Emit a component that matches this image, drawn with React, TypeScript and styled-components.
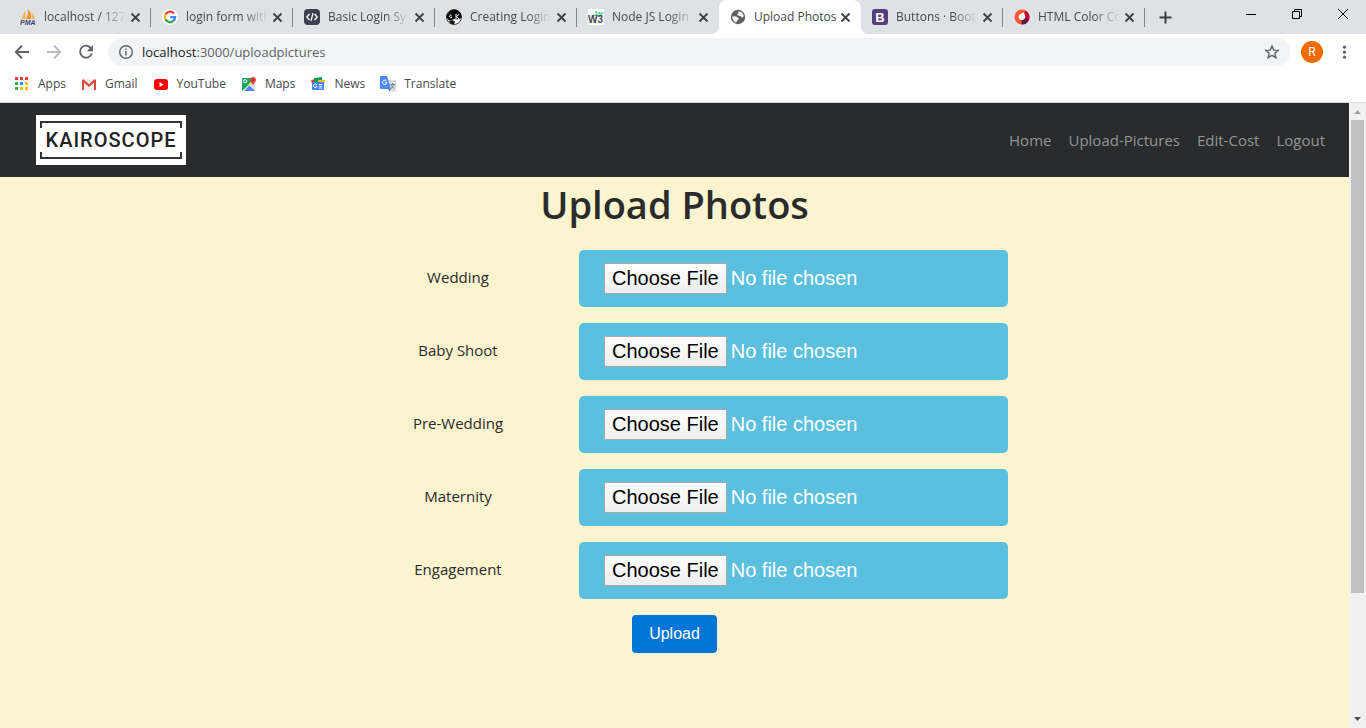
import React from "react";
import styled, { createGlobalStyle, css } from "styled-components";

const ui = `"Segoe UI", "Open Sans", "Noto Sans", sans-serif`;
const arial = `"Liberation Sans", Arial, sans-serif`;

const GlobalStyle = createGlobalStyle`
  *, *::before, *::after { box-sizing: border-box; }
  body { margin: 0; font-family: ${ui}; color: #292b2c; background: #fcf3cf; }
  button, input { font: inherit; color: inherit; }
  button { border: 0; padding: 0; background: none; cursor: pointer; }
  a { text-decoration: none; color: inherit; }
  svg { display: block; flex: none; }
`;

const Screen = styled.div`
  display: flex;
  flex-direction: column;
  min-height: 100vh;
`;

const TabStrip = styled.div`
  display: flex;
  height: 34px;
  padding-left: 9px;
  background: #dee1e6;
`;

const Tab = styled.div<{ $active?: boolean; $divider?: boolean }>`
  position: relative;
  display: flex;
  align-items: center;
  flex: 0 1 142px;
  min-width: 0;
  padding: 0 10px 0 11px;
  ${(p) =>
    p.$divider &&
    css`
      &::after {
        content: "";
        position: absolute;
        right: 0;
        top: 8px;
        width: 1px;
        height: 19px;
        background: #808388;
      }
    `}
  ${(p) =>
    p.$active &&
    css`
      background: #fff;
      border-radius: 8px 8px 0 0;
      &::before,
      &::after {
        content: "";
        position: absolute;
        bottom: 0;
        width: 8px;
        height: 8px;
      }
      &::before {
        left: -8px;
        background: radial-gradient(circle at 0 0, transparent 8px, #fff 8px);
      }
      &::after {
        right: -8px;
        background: radial-gradient(circle at 100% 0, transparent 8px, #fff 8px);
      }
    `}
`;

const TabTitle = styled.button<{ $fade: boolean }>`
  flex: 1;
  min-width: 0;
  margin: 0 1px 0 8px;
  overflow: hidden;
  white-space: nowrap;
  text-align: left;
  font-size: 12px;
  line-height: 18px;
  color: #45494d;
  ${(p) =>
    p.$fade &&
    css`
      mask-image: linear-gradient(to right, #000 66%, transparent 96%);
    `}
`;

const IconButton = styled.button`
  display: flex;
  align-items: center;
  justify-content: center;
`;

const NewTab = styled(IconButton)`
  width: 28px;
  margin-left: 6px;
`;

const WindowControls = styled.div`
  display: flex;
  margin-left: auto;
  height: 28px;
`;

const WindowButton = styled(IconButton)`
  width: 46px;
`;

const Toolbar = styled.div`
  display: flex;
  align-items: center;
  height: 36px;
  padding: 0 14px;
  background: #fff;
`;

const NavButtons = styled.div`
  display: flex;
  gap: 16px;
  margin-right: 14px;
`;

const AddressBar = styled.div`
  display: flex;
  align-items: center;
  flex: 1;
  height: 28px;
  padding: 0 10px;
  border-radius: 14px;
  background: #f1f3f4;
  font-size: 13px;
`;

const Host = styled.label`
  margin-left: 8px;
  color: #202124;
`;

const Address = styled.input`
  flex: 1;
  min-width: 0;
  padding: 0;
  border: 0;
  outline: 0;
  background: none;
  color: #5f6368;
`;

const Profile = styled.button`
  width: 22px;
  height: 22px;
  margin: 0 14px 0 11px;
  border-radius: 50%;
  background: #ef6c00;
  color: #fff;
  font-family: Roboto, sans-serif;
  font-size: 12px;
`;

const Bookmarks = styled.nav`
  display: flex;
  align-items: center;
  gap: 15px;
  height: 33px;
  padding: 0 14px 5px;
  border-bottom: 1px solid #d5d8dc;
  background: #fff;
`;

const Bookmark = styled.a`
  display: flex;
  align-items: center;
  gap: 8px;
  font-size: 12px;
  line-height: 18px;
  color: #45494d;
`;

const Viewport = styled.div`
  display: flex;
  flex: 1;
`;

const Page = styled.div`
  flex: 1;
  min-width: 0;
  background: #fcf3cf;
`;

const Header = styled.header`
  display: flex;
  align-items: center;
  justify-content: space-between;
  padding: 12px 24px 12px 36px;
  background: #292b2c;
`;

const Logo = styled.a`
  position: relative;
  display: flex;
  align-items: center;
  justify-content: center;
  width: 150px;
  height: 50px;
  background: #fff;
  color: #222;
  font: 500 20px Roboto, sans-serif;
  letter-spacing: 1px;
`;

const LogoFrame = styled.svg`
  position: absolute;
  inset: 0;
`;

const Menu = styled.nav`
  display: flex;
  gap: 17px;
  font-size: 15px;
  line-height: 24px;
  color: #949595;
`;

const Title = styled.h1`
  margin: 0;
  padding: 3px 0 21px;
  text-align: center;
  font-size: 38px;
  font-weight: 600;
  line-height: 49px;
`;

const UploadForm = styled.form`
  display: flex;
  flex-direction: column;
  align-items: center;
  gap: 16px;
`;

const Field = styled.div`
  display: flex;
  align-items: center;
  gap: 4px;
  width: 100%;
  max-width: 667px;
`;

const FieldLabel = styled.label`
  flex: 0 0 234px;
  padding-bottom: 4px;
  text-align: center;
  font-size: 15px;
  line-height: 24px;
`;

const FileInput = styled.input`
  flex: 1;
  min-width: 0;
  height: 57px;
  padding: 13px 25px;
  border-radius: 5px;
  background: #5bc0de;
  color: #fff;
  font-family: ${arial};
  font-size: 20px;
  line-height: 30px;

  &::file-selector-button {
    height: 31px;
    margin: 0 4px 0 0;
    padding: 0 7px;
    border: 1px solid #a9a9a9;
    border-radius: 0;
    background: linear-gradient(#fff, #eee);
    color: #000;
    font-family: ${arial};
    font-size: 20px;
  }
`;

const Submit = styled.button`
  width: 85px;
  height: 38px;
  border-radius: 4px;
  background: #0275d8;
  color: #fff;
  font-family: ${arial};
  font-size: 16px;
`;

const Scrollbar = styled.div`
  display: flex;
  flex-direction: column;
  flex: 0 0 17px;
  padding: 0 2px;
  background: #f1f1f1;
`;

const Arrow = styled.svg`
  width: 13px;
  height: 17px;
`;

const Track = styled.div`
  flex: 1;
`;

const Thumb = styled.div`
  height: 80%;
  background: #c1c1c1;
`;

const Viewbox16: React.FC<{ children: React.ReactNode; size?: number }> = ({ children, size = 16 }) => (
  <svg width={size} height={size} viewBox="0 0 16 16" aria-hidden="true">
    {children}
  </svg>
);

const PmaIcon = () => (
  <Viewbox16>
    <path d="M1 10C3 8 4 5 4.500 2C6 5 5.500 8 5 10Z" fill="#fbb040" />
    <path d="M5.500 10C8 7 8.500 4 7.500 0C11.500 3 12 7 10.500 10Z" fill="#f7941e" />
    <path d="M11 10C12.500 7 12 4.500 11.500 3C14 5 15 8 15 10Z" fill="#fbb869" />
    <text x="0" y="15.500" fontSize="7" fontWeight="bold" fontStyle="italic" fontFamily="Liberation Sans" fill="#3d3f70">PMA</text>
  </Viewbox16>
);

const GoogleIcon = () => (
  <Viewbox16>
    <circle cx="8" cy="8" r="8" fill="#fff" />
    <g fill="none" strokeWidth="2.400">
      <path d="M12 4.400A5.100 5.100 0 0 0 3.500 5.600" stroke="#ea4335" />
      <path d="M3.500 5.500A5.100 5.100 0 0 0 3.500 10.500" stroke="#fbbc05" />
      <path d="M3.500 10.400A5.100 5.100 0 0 0 11.500 11.800" stroke="#34a853" />
      <path d="M11.300 12A5.100 5.100 0 0 0 13.100 8.100H8.200" stroke="#4285f4" />
    </g>
  </Viewbox16>
);

const CodeIcon = () => (
  <Viewbox16>
    <rect width="16" height="16" rx="4" fill="#3b424f" />
    <path d="M5.500 5L2.800 8L5.500 11M10.500 5L13.200 8L10.500 11M9 4.200L7 11.800" fill="none" stroke="#fff" strokeWidth="1.300" />
  </Viewbox16>
);

const CreatorIcon = () => (
  <Viewbox16>
    <circle cx="8" cy="8" r="7.500" fill="#fff" stroke="#111" strokeWidth="0.800" />
    <path d="M.5 8.500A7.500 7.500 0 0 1 15.500 8L14.500 9.500L11.500 10.500L8 10L6 11L3 11.500Z" fill="#080808" />
    <path d="M5.600 6.200C3 5.400 2.400 9 5.600 8.800V7.500M10 5V10M10 8L13 5.500M10.500 7.500L13 10" stroke="#fff" fill="none" />
    <path d="M6 11L9 12.500L8 15.500L4.500 14.500L3 12Z" fill="#111" />
  </Viewbox16>
);

const JarIcon = () => (
  <Viewbox16>
    <rect width="16" height="16" fill="#fff" />
    <text x="5" y="7" fontSize="7" fontFamily="Liberation Sans" fontStyle="italic" fontWeight="bold" fill="#42c77c">Jar</text>
    <text x="0" y="14" fontSize="10" fontWeight="bold" fontFamily="Liberation Sans" fill="#3f474f">W3</text>
  </Viewbox16>
);

const GlobeIcon = () => (
  <Viewbox16>
    <circle cx="8" cy="8" r="7.200" fill="#5a5f64" />
    <path d="M2.400 7.200L5.400 7.600C6.800 7.800 7.400 8.600 8.200 8.800C9.200 9.200 9 10.200 8 10.600C7 11 7.400 12 6.600 12.600L6 13.600C3.600 12.700 2 10.300 2.400 7.200Z" fill="#fff" />
    <path d="M8.500 2.200C11.500 2.400 13.600 4.900 13.700 7.400L12.300 8.400C11.300 8.400 11.100 7.300 10 7.100C8.600 7 7.400 6.600 7.300 5.600C7.300 4.600 8.600 4.700 8.400 3.800Z" fill="#fff" />
  </Viewbox16>
);

const BootstrapIcon = () => (
  <Viewbox16>
    <rect width="16" height="16" rx="3" fill="#563d7c" />
    <text x="8" y="12.500" textAnchor="middle" fontSize="13" fontWeight="bold" fontFamily="Liberation Sans" fill="#fff">B</text>
  </Viewbox16>
);

const ColorIcon = () => (
  <Viewbox16>
    <circle cx="8" cy="8" r="7.500" fill="#ff5733" />
    <path d="M11.500 1.400A7.500 7.500 0 0 1 14.500 11.800L8 8Z" fill="#c70039" />
    <path d="M14.800 11A7.500 7.500 0 0 1 7.500 15.500L8 8Z" fill="#581845" />
    <path d="M4.700 8C4.700 5.500 6.600 4.600 9.800 3.600C11 6 11.500 7 11.200 8.500A3.300 3.300 0 0 1 4.700 8Z" fill="#fff" />
  </Viewbox16>
);

const AppsIcon = () => {
  const colors = ["#ea4335", "#ea4335", "#ea4335", "#34a853", "#2196f3", "#fbbc05", "#34a853", "#fbbc05", "#fbbc05"];
  return (
    <Viewbox16>
      {colors.map((c, i) => (
        <rect key={i} x={1 + (i % 3) * 5} y={1 + Math.floor(i / 3) * 5} width="3" height="3" fill={c} />
      ))}
    </Viewbox16>
  );
};

const GmailIcon = () => (
  <Viewbox16>
    <path d="M1 3H15V14H1Z" fill="#f1efed" />
    <path d="M2 4V14M14 4V14" stroke="#d54b3d" strokeWidth="2" />
    <path d="M1.500 3.800L8 9.500L14.500 3.800" fill="none" stroke="#d54b3d" strokeWidth="2.200" />
  </Viewbox16>
);

const YoutubeIcon = () => (
  <Viewbox16>
    <rect x="1" y="3" width="14" height="11" rx="3" fill="#f00" />
    <path d="M6.500 6L10.500 8.500L6.500 11Z" fill="#fff" />
  </Viewbox16>
);

const MapsIcon = () => (
  <Viewbox16>
    <rect x="1" y="2" width="13" height="13" rx="1" fill="#1fa463" />
    <path d="M1 15L14 3V15Z" fill="#e6e6e6" />
    <path d="M3 15L8.500 9.500L14 15Z" fill="#4a89f3" />
    <path d="M7 9.500L13 4" stroke="#ffd54b" strokeWidth="1.500" />
    <circle cx="4.200" cy="5.200" r="1.600" fill="none" stroke="#fff" />
    <path d="M12 10C12 7.500 9.200 6.500 9.200 3.900A2.900 2.900 0 0 1 15 3.900C15 6.500 12 7.500 12 10Z" fill="#e14b3d" />
    <circle cx="12" cy="4" r="1" fill="#7b231e" />
  </Viewbox16>
);

const NewsIcon = () => (
  <Viewbox16>
    <path d="M1 4L7 3V8H2Z" fill="#ea4335" />
    <path d="M4 2L12 1V7H4Z" fill="#0f9d58" />
    <path d="M8 4L15 4L14 9H8Z" fill="#fbbc05" />
    <rect x="2" y="6" width="12" height="8" rx="1" fill="#4285f4" />
    <path d="M6.800 8.800A1.800 1.800 0 1 0 7 10.300H5.500M9 8.500H12M9 10.200H12M9 12H12" fill="none" stroke="#fff" />
  </Viewbox16>
);

const TranslateIcon = () => (
  <Viewbox16>
    <path d="M7 4H16V15.500H9Z" fill="#dadce0" />
    <path d="M8 12.500L11 12.500L9.500 15.500Z" fill="#3367d6" />
    <path d="M1 0H7L11 13H1Q0 13 0 12V1Q0 0 1 0Z" fill="#4c8bf5" />
    <path d="M6.600 5A2.200 2.200 0 1 0 7 6.800H4.800" fill="none" stroke="#fff" />
    <path d="M10.500 8.500H15M12.500 7V8.500M14 8.500Q13.300 11.500 10.800 12.500M11.200 8.800Q12.200 11.500 14.500 12.500" fill="none" stroke="#73828c" strokeWidth="0.900" />
  </Viewbox16>
);

const tabs = [
  { title: "localhost / 127", Icon: PmaIcon },
  { title: "login form with", Icon: GoogleIcon },
  { title: "Basic Login Sy", Icon: CodeIcon },
  { title: "Creating Login", Icon: CreatorIcon },
  { title: "Node JS Login", Icon: JarIcon },
  { title: "Upload Photos", Icon: GlobeIcon, active: true },
  { title: "Buttons · Boot", Icon: BootstrapIcon },
  { title: "HTML Color Co", Icon: ColorIcon },
];

const bookmarks = [
  { name: "Apps", Icon: AppsIcon },
  { name: "Gmail", Icon: GmailIcon },
  { name: "YouTube", Icon: YoutubeIcon },
  { name: "Maps", Icon: MapsIcon },
  { name: "News", Icon: NewsIcon },
  { name: "Translate", Icon: TranslateIcon },
];

const fields = [
  { id: "wedding", label: "Wedding" },
  { id: "baby", label: "Baby Shoot" },
  { id: "prewedding", label: "Pre-Wedding" },
  { id: "maternity", label: "Maternity" },
  { id: "engagement", label: "Engagement" },
];

const BrowserTabs = () => (
  <TabStrip>
    {tabs.map(({ title, Icon, active }, i) => (
      <Tab key={title} $active={active} $divider={!active && !tabs[i + 1]?.active}>
        <Icon />
        <TabTitle $fade={!active}>{title}</TabTitle>
        <IconButton aria-label="Close tab">
          <svg width="11" height="11" viewBox="0 0 11 11">
            <path d="M1.500 1.500L9.500 9.500M9.500 1.500L1.500 9.500" stroke="#3c4043" strokeWidth="1.800" />
          </svg>
        </IconButton>
      </Tab>
    ))}
    <NewTab aria-label="New tab">
      <svg width="13" height="13" viewBox="0 0 13 13">
        <path d="M6.500 .5V12.500M.5 6.500H12.500" stroke="#3c4043" strokeWidth="2" />
      </svg>
    </NewTab>
    <WindowControls>
      <WindowButton aria-label="Minimize">
        <svg width="10" height="10"><path d="M0 5.500H10" stroke="#000" /></svg>
      </WindowButton>
      <WindowButton aria-label="Restore">
        <svg width="10" height="10"><path d="M.5 2.500H7.500V9.500H.5ZM2.500 2.500V.5H9.500V7.500H7.500" fill="none" stroke="#000" /></svg>
      </WindowButton>
      <WindowButton aria-label="Close">
        <svg width="10" height="10"><path d="M0 0L10 10M10 0L0 10" stroke="#000" /></svg>
      </WindowButton>
    </WindowControls>
  </TabStrip>
);

const BrowserToolbar = () => (
  <Toolbar>
    <NavButtons>
      <IconButton aria-label="Back">
        <Viewbox16><path d="M15 8H2M8 1.500L1.800 8L8 14.500" fill="none" stroke="#5f6368" strokeWidth="1.900" /></Viewbox16>
      </IconButton>
      <IconButton aria-label="Forward">
        <Viewbox16><path d="M1 8H14M8 1.500L14.200 8L8 14.500" fill="none" stroke="#babcbe" strokeWidth="1.900" /></Viewbox16>
      </IconButton>
      <IconButton aria-label="Reload">
        <Viewbox16>
          <path d="M13.200 4.500A6 6 0 1 0 13.800 9.500" fill="none" stroke="#5f6368" strokeWidth="1.900" />
          <path d="M15 1V7.200H8.800Z" fill="#5f6368" />
        </Viewbox16>
      </IconButton>
    </NavButtons>
    <AddressBar>
      <Viewbox16>
        <circle cx="8" cy="8" r="6.300" fill="none" stroke="#5f6368" strokeWidth="1.400" />
        <path d="M8 7V11.500M8 4.500V6" stroke="#5f6368" strokeWidth="1.500" />
      </Viewbox16>
      <Host htmlFor="address">localhost</Host>
      <Address id="address" type="text" defaultValue=":3000/uploadpictures" />
      <IconButton aria-label="Bookmark this page">
        <Viewbox16>
          <path d="M8 2L9.700 6.100L14.200 6.400L10.800 9.300L11.900 13.700L8 11.300L4.100 13.700L5.200 9.300L1.800 6.400L6.300 6.100Z" fill="none" stroke="#5f6368" strokeWidth="1.400" />
        </Viewbox16>
      </IconButton>
    </AddressBar>
    <Profile>R</Profile>
    <IconButton aria-label="Menu">
      <svg width="15" height="16" viewBox="0 0 15 16" fill="#5f6368">
        <circle cx="7.500" cy="3.200" r="1.600" />
        <circle cx="7.500" cy="8.200" r="1.600" />
        <circle cx="7.500" cy="13.200" r="1.600" />
      </svg>
    </IconButton>
  </Toolbar>
);

export default function App() {
  return (
    <Screen>
      <GlobalStyle />
      <BrowserTabs />
      <BrowserToolbar />
      <Bookmarks>
        {bookmarks.map(({ name, Icon }) => (
          <Bookmark key={name} href="#">
            <Icon />
            {name}
          </Bookmark>
        ))}
      </Bookmarks>
      <Viewport>
        <Page>
          <Header>
            <Logo href="#">
              <LogoFrame width="150" height="50" aria-hidden="true">
                <path d="M5 13V7H145V13M5 37V43H145V37" fill="none" stroke="#333" strokeWidth="2" />
              </LogoFrame>
              KAIROSCOPE
            </Logo>
            <Menu>
              <a href="#">Home</a>
              <a href="#">Upload-Pictures</a>
              <a href="#">Edit-Cost</a>
              <a href="#">Logout</a>
            </Menu>
          </Header>
          <main>
            <Title>Upload Photos</Title>
            <UploadForm onSubmit={(e) => e.preventDefault()}>
              {fields.map((f) => (
                <Field key={f.id}>
                  <FieldLabel htmlFor={f.id}>{f.label}</FieldLabel>
                  <FileInput id={f.id} type="file" />
                </Field>
              ))}
              <Submit type="submit">Upload</Submit>
            </UploadForm>
          </main>
        </Page>
        <Scrollbar aria-hidden="true">
          <Arrow><path d="M3 11L6.500 7L10 11Z" fill="#a3a3a3" /></Arrow>
          <Track>
            <Thumb />
          </Track>
          <Arrow><path d="M3 6L6.500 10L10 6Z" fill="#505050" /></Arrow>
        </Scrollbar>
      </Viewport>
    </Screen>
  );
}
